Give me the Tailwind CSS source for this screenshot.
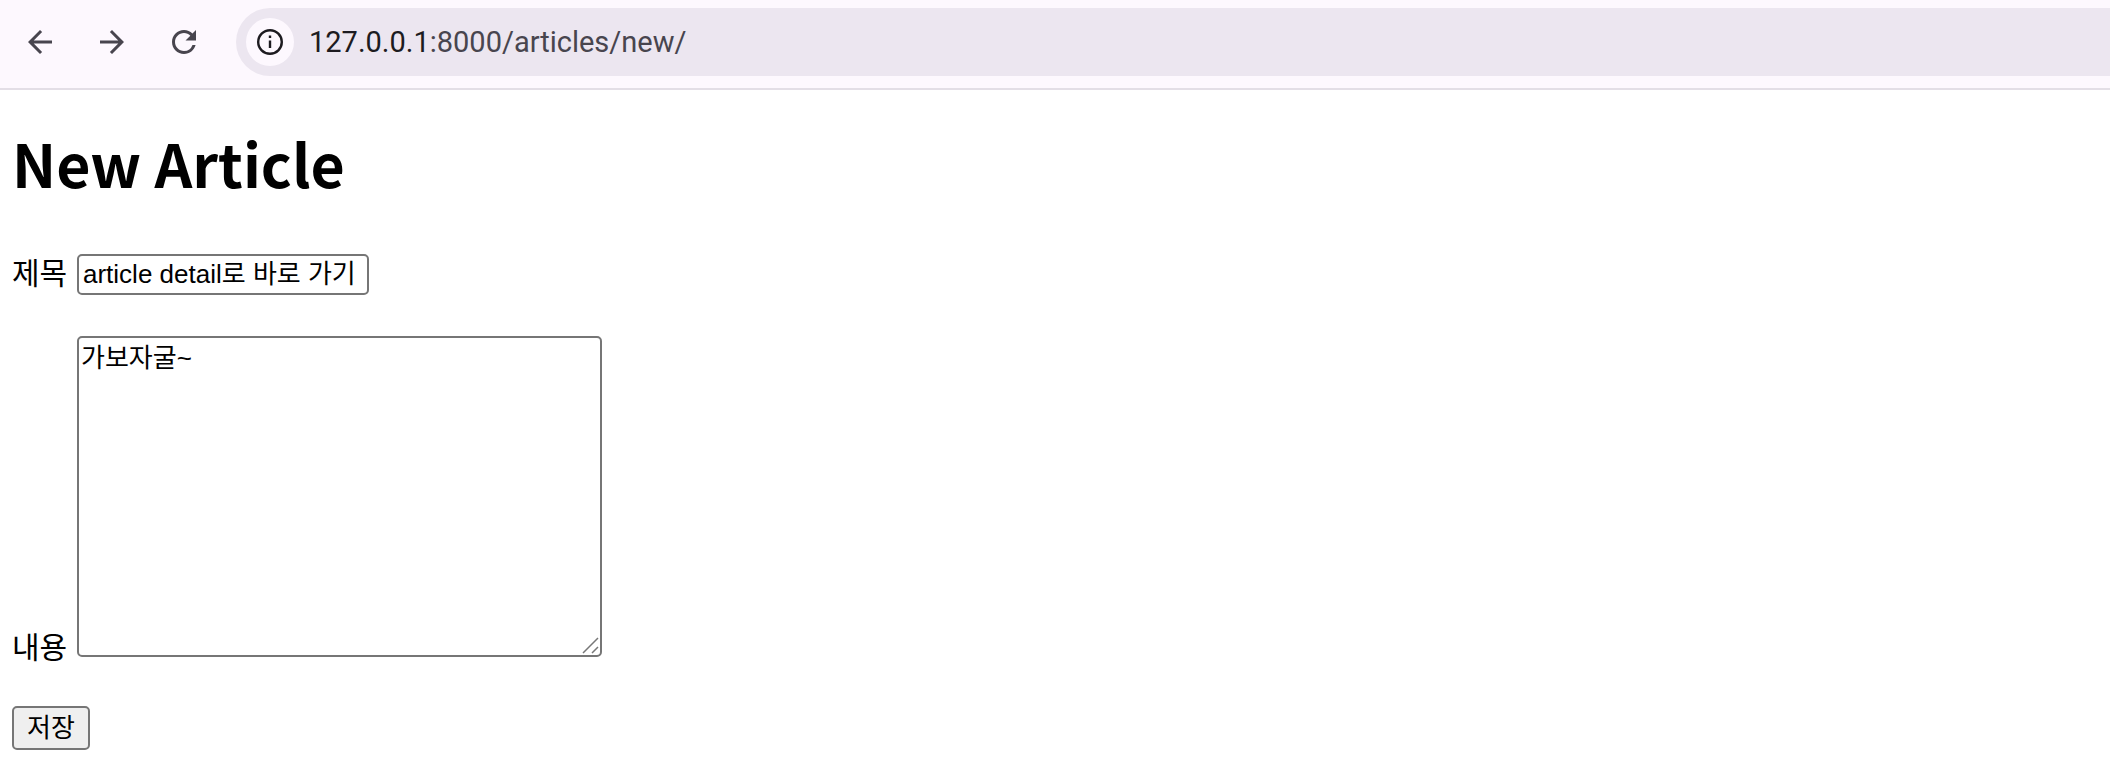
<!DOCTYPE html>
<html>
<head>
<meta charset="utf-8">
<script src="https://cdn.jsdelivr.net/npm/@tailwindcss/browser@4"></script>
<title>New Article</title>
</head>
<body class="bg-white text-black overflow-hidden h-[776px]">
<header class="h-[90px] bg-[#fdf8fe] border-b-2 border-[#e3dee6] flex items-start">
  <nav class="w-[236px] h-[84px] flex items-center shrink-0 pl-[22px] gap-[36px] text-[#48454e]">
    <svg class="w-9 h-9" viewBox="0 0 24 24" fill="currentColor"><path d="M20 11H7.830l5.590-5.590L12 4l-8 8 8 8 1.410-1.410L7.830 13H20v-2z"/></svg>
    <svg class="w-9 h-9" viewBox="0 0 24 24" fill="currentColor"><path d="m12 4-1.410 1.410L16.170 11H4v2h12.170l-5.580 5.590L12 20l8-8z"/></svg>
    <svg class="w-9 h-9" viewBox="0 0 24 24" fill="currentColor"><path d="M17.650 6.350A7.958 7.958 0 0 0 12 4c-4.420 0-7.990 3.580-7.990 8s3.570 8 7.990 8c3.730 0 6.840-2.550 7.730-6h-2.080A5.990 5.990 0 0 1 12 18c-3.310 0-6-2.690-6-6s2.690-6 6-6c1.660 0 3.140.690 4.220 1.780L13 11h7V4l-2.350 2.350z"/></svg>
  </nav>
  <div class="mt-2 h-[68px] flex-1 rounded-l-[34px] bg-[#ece6f0] flex items-center pl-[10px]">
    <div class="w-12 h-12 rounded-full bg-[#fdf8fe] flex items-center justify-center shrink-0">
      <svg class="w-7 h-7" viewBox="0 0 28 28" fill="none" stroke="#1d1b20" stroke-width="2.400"><circle cx="14" cy="14" r="11.800"/><path d="M14 12.500v7.500"/><path d="M14 7.500v2.500"/></svg>
    </div>
    <p class="ml-[15px] text-[29px] leading-none text-[#48454e] font-['Roboto',sans-serif]"><span class="text-[#1d1b20]">127.0.0.1</span>:8000/articles/new/</p>
  </div>
</header>
<main class="px-3">
  <h1 class="mt-[31px] text-[59px] leading-[84px] font-bold font-['Noto_Sans_CJK_KR',sans-serif]">New Article</h1>
  <form>
    <div class="mt-[49px] h-[41px] flex items-center gap-[12px]">
      <label class="w-[53px] pb-[8px] text-[30px] leading-[36px] whitespace-nowrap font-['Noto_Sans_CJK_KR',sans-serif]">제목</label>
      <input type="text" value="article detail로 바로 가기" class="w-[292px] h-[41px] px-[4px] pb-[6px] border-2 border-[#767676] rounded-[5px] text-[26px] font-['Liberation_Sans','Noto_Sans_CJK_KR',sans-serif]">
    </div>
    <div class="mt-[41px] flex items-end gap-[12px]">
      <label class="w-[53px] text-[30px] leading-[24px] whitespace-nowrap font-['Noto_Sans_CJK_KR',sans-serif]">내용</label>
      <div class="relative w-[525px] h-[321px]">
        <textarea class="block w-full h-full resize-none p-[2px] pt-[5px] border-2 border-[#767676] rounded-[5px] text-[26px] leading-[31px] font-['Liberation_Sans','Noto_Sans_CJK_KR',sans-serif]">가보자굴~</textarea>
        <svg class="absolute right-[2px] bottom-[2px] w-[18px] h-[18px]" viewBox="0 0 18 18" fill="none" stroke="#777" stroke-width="1.500"><path d="M1 16 16 1M10 16l6-6"/></svg>
      </div>
    </div>
    <button type="button" class="block mt-[49px] w-[78px] h-[44px] bg-[#efefef] border-2 border-[#767676] rounded-[5px] text-[26px] leading-none font-['Liberation_Sans','Noto_Sans_CJK_KR',sans-serif]">저장</button>
  </form>
</main>
</body>
</html>
